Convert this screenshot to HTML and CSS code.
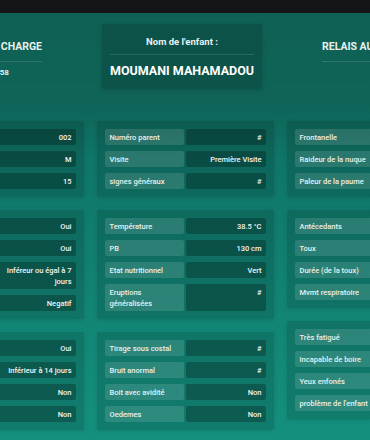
FILE: index.html
```html
<!DOCTYPE html>
<html lang="fr">
	<head>
		<meta charset="UTF-8" />
		<meta name="viewport" content="width=device-width, initial-scale=1.0" />
		<title>Fiche de prise en charge</title>
		<link rel="stylesheet" href="styles.css">
	</head>
	<body>
		<div class="topbar"></div>

		<div class="page">
			<header class="head">
				<div class="head-block">
					<h2>PRISE EN CHARGE</h2>
					<p>N°058</p>
				</div>
				<div class="name-card">
					<h3>Nom de l'enfant :</h3>
					<p>MOUMANI MAHAMADOU</p>
				</div>
				<div class="head-block">
					<h2>RELAIS AU CSI</h2>
					<p></p>
				</div>
			</header>

			<main class="grid">
				<div class="col">
					<div class="panel">
						<div class="row"><span class="label">Numéro enfant</span><span class="value">002</span></div>
						<div class="row"><span class="label">Sexe</span><span class="value">M</span></div>
						<div class="row"><span class="label">Age (mois)</span><span class="value">15</span></div>
					</div>
					<div class="panel">
						<div class="row"><span class="label">Fièvre</span><span class="value">Oui</span></div>
						<div class="row"><span class="label">Convulsions</span><span class="value">Oui</span></div>
						<div class="row"><span class="label">Durée</span><span class="value">Inféreur ou égal à 7 jours</span></div>
						<div class="row"><span class="label">TDR</span><span class="value">Negatif</span></div>
					</div>
					<div class="panel">
						<div class="row"><span class="label">Diarrhée</span><span class="value">Oui</span></div>
						<div class="row"><span class="label">Durée</span><span class="value">Inférieur à 14 jours</span></div>
						<div class="row"><span class="label">Sang</span><span class="value">Non</span></div>
						<div class="row"><span class="label">Vomit tout</span><span class="value">Non</span></div>
					</div>
				</div>

				<div class="col">
					<div class="panel">
						<div class="row"><span class="label">Numéro parent</span><span class="value">#</span></div>
						<div class="row"><span class="label">Visite</span><span class="value">Première Visite</span></div>
						<div class="row"><span class="label">signes généraux</span><span class="value">#</span></div>
					</div>
					<div class="panel">
						<div class="row"><span class="label">Température</span><span class="value">38.5 °C</span></div>
						<div class="row"><span class="label">PB</span><span class="value">130 cm</span></div>
						<div class="row"><span class="label">Etat nutritionnel</span><span class="value">Vert</span></div>
						<div class="row"><span class="label">Eruptions généralisées</span><span class="value">#</span></div>
					</div>
					<div class="panel">
						<div class="row"><span class="label">Tirage sous costal</span><span class="value">#</span></div>
						<div class="row"><span class="label">Bruit anormal</span><span class="value">#</span></div>
						<div class="row"><span class="label">Boit avec avidité</span><span class="value">Non</span></div>
						<div class="row"><span class="label">Oedemes</span><span class="value">Non</span></div>
					</div>
				</div>

				<div class="col">
					<div class="panel">
						<div class="row"><span class="label">Frontanelle</span><span class="value">#</span></div>
						<div class="row"><span class="label">Raideur de la nuque</span><span class="value">Non</span></div>
						<div class="row"><span class="label">Paleur de la paume</span><span class="value">Non</span></div>
					</div>
					<div class="panel">
						<div class="row"><span class="label">Antécedants</span><span class="value">#</span></div>
						<div class="row"><span class="label">Toux</span><span class="value">Non</span></div>
						<div class="row"><span class="label">Durée (de la toux)</span><span class="value">#</span></div>
						<div class="row"><span class="label">Mvmt respiratoire</span><span class="value">#</span></div>
					</div>
					<div class="panel">
						<div class="row"><span class="label">Très fatigué</span><span class="value">Non</span></div>
						<div class="row"><span class="label">Incapable de boire</span><span class="value">Non</span></div>
						<div class="row"><span class="label">Yeux enfonés</span><span class="value">Non</span></div>
						<div class="row"><span class="label">problème de l'enfant</span><span class="value">#</span></div>
					</div>
				</div>
			</main>
		</div>
	</body>
</html>
```

FILE: styles.css
```css
* {
	box-sizing: border-box;
}
html,
body {
	margin: 0;
	padding: 0;
	height: 100%;
}
body {
	font-family: Roboto, "Liberation Sans", sans-serif;
	color: #e8f1ee;
	overflow: hidden;
	background: linear-gradient(180deg, #0f6055 0px, #0f6357 100px, #0f7669 160px, #128474 300px, #14907f 440px);
}
.topbar {
	height: 13px;
	background-color: #131318;
}
.page {
	display: flex;
	flex-direction: column;
	align-items: center;
}
.head {
	width: 557px;
	flex-shrink: 0;
	display: grid;
	grid-template-columns: 1fr 160px 1fr;
	column-gap: 60px;
	padding: 11px 6px 0 0;
	align-items: start;
}
.head-block {
	padding-top: 16px;
	justify-self: start;
	text-align: center;
}
.head-block:first-child {
	justify-self: end;
}
.head-block h2 {
	margin: 0;
	font-size: 10.5px;
	line-height: 14px;
	font-weight: 700;
	padding-bottom: 7px;
	border-bottom: 1px solid rgba(255, 255, 255, 0.13);
}
.head-block p {
	margin: 5px 0 0;
	font-size: 8px;
	line-height: 12px;
	font-weight: 700;
}
.name-card {
	background-color: rgba(0, 0, 0, 0.15);
	box-shadow: 0 1px 4px rgba(0, 0, 0, 0.15);
	border-radius: 2px;
	padding: 12px 8px 11px;
	text-align: center;
}
.name-card h3 {
	margin: 0;
	font-size: 9.5px;
	line-height: 12px;
	font-weight: 700;
	padding-bottom: 6px;
	border-bottom: 1px solid rgba(255, 255, 255, 0.12);
}
.name-card p {
	margin: 8px 0 0;
	font-size: 12.5px;
	line-height: 15px;
	font-weight: 700;
	color: #ffffff;
	white-space: nowrap;
}
.grid {
	width: 557px;
	flex-shrink: 0;
	display: grid;
	grid-template-columns: repeat(3, 1fr);
	column-gap: 13px;
	align-items: start;
	margin-top: 32px;
}
.col {
	display: flex;
	flex-direction: column;
	gap: 13px;
}
.panel {
	background-color: rgba(0, 0, 0, 0.13);
	box-shadow: 0 1px 4px rgba(0, 0, 0, 0.12);
	border-radius: 2px;
	padding: 8px;
	display: flex;
	flex-direction: column;
	gap: 6px;
}
.row {
	display: grid;
	grid-template-columns: 1fr 1fr;
	gap: 2px;
	font-size: 7.5px;
	line-height: 11px;
	font-weight: 500;
}
.label,
.value {
	padding: 2.5px 4px 2.5px 5px;
	border-radius: 2px;
}
.label {
	background-color: rgba(255, 255, 255, 0.12);
}
.value {
	background-color: rgba(0, 0, 0, 0.25);
	text-align: right;
	color: #f2f5f4;
}
```
